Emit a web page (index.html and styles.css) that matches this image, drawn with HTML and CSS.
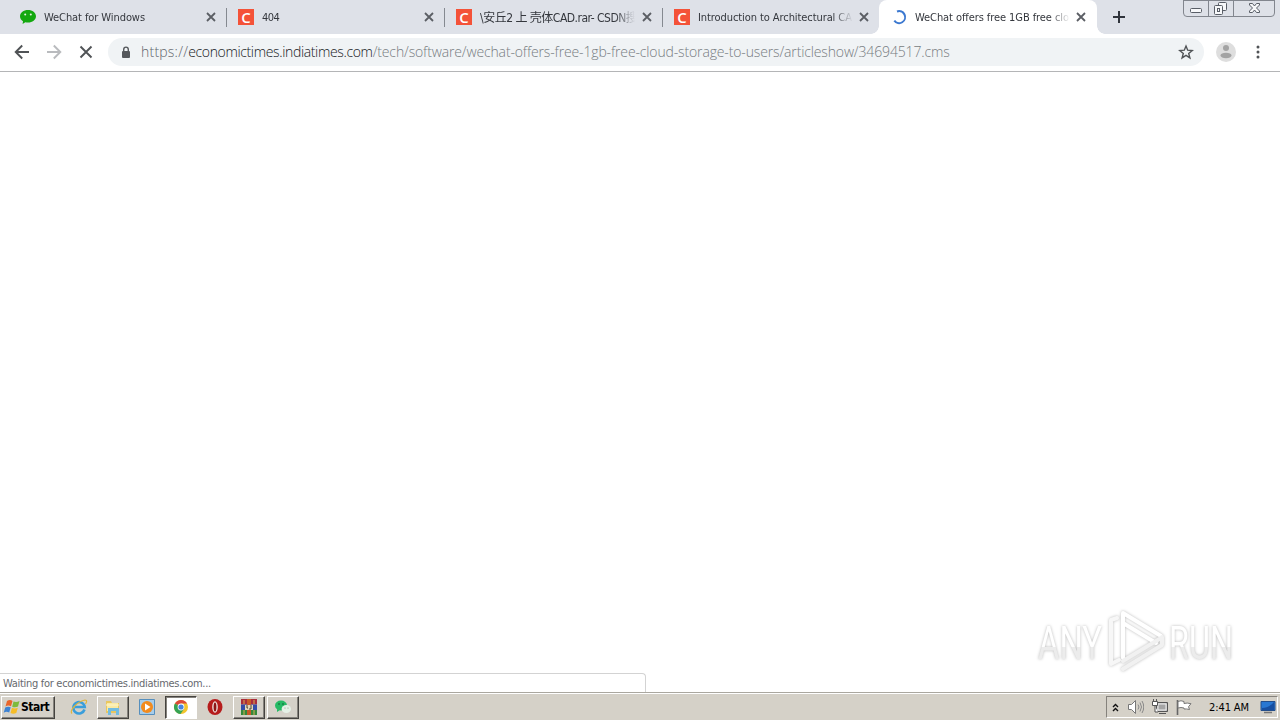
FILE: index.html
```html
<!DOCTYPE html>
<html lang="en">

<head>
    <meta charset="UTF-8">
    <meta name="viewport" content="width=device-width, initial-scale=1.0">
    <title>WeChat offers free 1GB free cloud storage</title>
    <link rel="stylesheet" href="styles.css">
</head>

<body>
    <div class="browser">
        <header class="tab-strip">
            <div class="tab">
                <svg class="favicon" viewBox="0 0 16 16"><path d="M8 1C3.600 1 0 3.700 0 7.300c0 2.100 1.200 3.900 3 5L2.600 15l2.700-1.700c.9.200 1.800.3 2.700.3 4.400 0 8-2.700 8-6.300S12.400 1 8 1z" fill="#13a80f"/><circle cx="5.200" cy="5.500" r="1" fill="#e6f5e3"/><circle cx="10.800" cy="5.500" r="1" fill="#e6f5e3"/></svg>
                <span class="title">WeChat for Windows</span>
                <svg class="close" viewBox="0 0 10 10"><path d="M1 1l8 8M9 1L1 9"/></svg>
            </div>
            <div class="tab">
                <span class="favicon csdn">C</span>
                <span class="title short">404</span>
                <svg class="close" viewBox="0 0 10 10"><path d="M1 1l8 8M9 1L1 9"/></svg>
            </div>
            <div class="tab">
                <span class="favicon csdn">C</span>
                <span class="title cjk">\安丘2 上 壳体CAD.rar- CSDN搜</span>
                <svg class="close" viewBox="0 0 10 10"><path d="M1 1l8 8M9 1L1 9"/></svg>
            </div>
            <div class="tab last">
                <span class="favicon csdn">C</span>
                <span class="title">Introduction to Architectural CA</span>
                <svg class="close" viewBox="0 0 10 10"><path d="M1 1l8 8M9 1L1 9"/></svg>
            </div>
            <div class="tab active">
                <svg class="favicon" viewBox="0 0 16 16"><path d="M6 2.500A6 6 0 1 1 3.300 11.700" fill="none" stroke="#3b78d0" stroke-width="2"/></svg>
                <span class="title">WeChat offers free 1GB free clo</span>
                <svg class="close" viewBox="0 0 10 10"><path d="M1 1l8 8M9 1L1 9"/></svg>
            </div>
            <svg class="new-tab" viewBox="0 0 14 14"><path d="M7 1v12M1 7h12" stroke="#30343c" stroke-width="2"/></svg>
            <svg class="window-buttons" viewBox="0 0 94 18">
                <path d="M1.500 0v13q0 3.500 3.500 3.500h84q3.500 0 3.500-3.500V0M1.500.5h91M26.500 0v16M51.500 0v16" fill="none" stroke="#82868e"/>
                <g fill="#f7f8fa" stroke="#595e67">
                    <rect x="8.500" y="8.500" width="11" height="4" rx="1"/>
                    <rect x="36.500" y="2.500" width="8" height="8" rx="1"/>
                    <rect x="32.500" y="5.500" width="8" height="9" rx="1"/>
                    <rect x="35.500" y="8.500" width="2" height="3"/>
                    <path d="M67.500 3.500h3l2 2.500 2-2.500h3v1.500l-3 3 3 3v1.500h-3l-2-2.500-2 2.500h-3V11l3-3-3-3z"/>
                </g>
            </svg>
        </header>

        <nav class="toolbar">
            <svg class="nav-icon" viewBox="0 0 16 16"><path d="M15 8H2M8.200 1.500L1.700 8l6.500 6.500" stroke="#505356"/></svg>
            <svg class="nav-icon" viewBox="0 0 16 16"><path d="M1 8h13M7.800 1.500L14.300 8l-6.500 6.500" stroke="#b9bbbe"/></svg>
            <svg class="nav-icon" viewBox="0 0 16 16"><path d="M2.500 2.500l11 11M13.500 2.500l-11 11" stroke="#505356"/></svg>
            <div class="omnibox">
                <svg class="lock" viewBox="0 0 10 13"><rect x="1" y="5" width="8" height="7" rx="1" fill="#55585c"/><path d="M2.700 5V3.400a2.300 2.300 0 0 1 4.600 0V5" fill="none" stroke="#55585c" stroke-width="1.400"/></svg>
                <span class="url"><span class="scheme">https://</span><span class="host">economictimes.indiatimes.com</span><span class="path">/tech/software/wechat-offers-free-1gb-free-cloud-storage-to-users/articleshow/34694517.cms</span></span>
                <svg class="star" viewBox="0 0 16 16"><path d="M8 2l1.700 4.200 4.500.3-3.500 2.900 1.200 4.500L8 11.400l-3.900 2.500 1.200-4.500L1.800 6.500l4.500-.3z" fill="none" stroke="#505356" stroke-width="1.400"/></svg>
            </div>
            <svg class="avatar" viewBox="0 0 20 20"><circle cx="10" cy="10" r="10" fill="#dedede"/><circle cx="10" cy="6" r="3" fill="#a3a3a3"/><ellipse cx="10" cy="13.500" rx="5.500" ry="2.700" fill="#a3a3a3"/></svg>
            <svg class="menu" viewBox="0 0 4 14"><g fill="#505356"><circle cx="2" cy="2" r="1.500"/><circle cx="2" cy="7" r="1.500"/><circle cx="2" cy="12" r="1.500"/></g></svg>
        </nav>

        <main class="page">
            <div class="status">Waiting for economictimes.indiatimes.com...</div>
            <svg class="watermark" viewBox="0 0 210 76">
                <defs>
                    <linearGradient id="fade" x1="0" y1="0" x2="0" y2="1">
                        <stop offset=".58" stop-color="#fff"/>
                        <stop offset=".58" stop-color="#ececec"/>
                    </linearGradient>
                </defs>
                <g class="mark-text" fill="url(#fade)">
                    <text x="8" y="57" textLength="64" lengthAdjust="spacingAndGlyphs">ANY</text>
                    <text x="139" y="57" textLength="64" lengthAdjust="spacingAndGlyphs">RUN</text>
                </g>
                <g class="mark-logo">
                    <path d="M87 16l-6 2v44l8-4" stroke="#f7f7f7"/>
                    <path d="M93 56V11l38 23M93 21l33 20"/>
                    <path d="M93 59l38-23M93 67l39-24v-8" stroke="#f1f1f1"/>
                </g>
            </svg>
        </main>
    </div>

    <footer class="taskbar">
        <div class="start">
            <svg viewBox="0 0 18 16"><path d="M4 2q3-1.800 5.500 0L8 7.200q-3-1.400-5.500.3z" fill="#e9652b"/><path d="M10.500 2.500q3 1.200 6-.5L15 7.500q-3 1.500-5.800.2z" fill="#7dbb3d"/><path d="M2.200 8.500q3-1.600 5.500-.2L6.200 13.500q-3-1.500-5.500.2z" fill="#3d83d3"/><path d="M9 8.700q3 1.400 5.800 0l-1.500 5.200q-3 1.600-5.800.1z" fill="#f6bd27"/></svg>
            <span>Start</span>
        </div>
        <div class="task ie">
            <svg viewBox="0 0 18 18"><path d="M14.500 11.500A5.700 5.700 0 1 1 14.700 9H5" fill="none" stroke="#3a9edb" stroke-width="2.600"/><path d="M2 15.500C-1 12.500 8 3 15 2c2.500 0 1.500 2.500.5 4" fill="none" stroke="#e0b53c" stroke-width="1.200"/></svg>
        </div>
        <div class="task raised">
            <svg viewBox="0 0 18 18"><path d="M2 3h5l1 2h7v10H2z" fill="#e9c75f"/><path d="M3 5h11v8H3z" fill="#faeaa4"/><path d="M4 10h11v7h-3v-4H7v4H4z" fill="#73bce1"/><path d="M2 7h13" stroke="#fff5ca"/></svg>
        </div>
        <div class="task">
            <svg viewBox="0 0 18 18"><path d="M1.500 1.500h15v15h-15z" fill="#a7cdea" stroke="#568fbd"/><circle cx="9" cy="9" r="6" fill="#f28b1e"/><path d="M7 5.500l5.500 3.500L7 12.500z" fill="#fff"/></svg>
        </div>
        <div class="task pressed">
            <svg viewBox="0 0 18 18"><circle cx="9" cy="9" r="7" fill="#f3c52d"/><path d="M9 9L2.900 5.500A7 7 0 0 1 15.100 5.500H9z" fill="#dc4939"/><path d="M2.900 5.500A7 7 0 0 0 8.500 16L12 11 9 9z" fill="#36a354"/><circle cx="9" cy="9" r="3.400" fill="#fff"/><circle cx="9" cy="9" r="2.600" fill="#4584df"/></svg>
        </div>
        <div class="task">
            <svg viewBox="0 0 18 18"><ellipse cx="9" cy="9" rx="7.500" ry="8" fill="#b61c1c"/><ellipse cx="9" cy="9" rx="2.800" ry="5.800" fill="#eee3df"/><ellipse cx="9" cy="9" rx="1.400" ry="4.600" fill="#8d1515"/></svg>
        </div>
        <div class="task raised">
            <svg viewBox="0 0 18 18"><path d="M1 1h16v5.500H1z" fill="#a92d3c"/><path d="M1 6.500h16V12H1z" fill="#334da8"/><path d="M1 12h16v5H1z" fill="#35883b"/><path d="M7 1h4v16H7z" fill="#c85928"/><path d="M5 7h8v5H5z" fill="#e3d6ba"/><path d="M7 7v3h1M11 7v4H9" fill="none" stroke="#443"/><path d="M4 2v4M14 2v4M4 12v5M14 12v5" stroke="#d5ad54"/></svg>
        </div>
        <div class="task raised">
            <svg viewBox="0 0 18 18"><ellipse cx="7" cy="7.500" rx="6" ry="5" fill="#25ba64"/><path d="M3 11v3l3-2z" fill="#25ba64"/><circle cx="5" cy="6" r=".8" fill="#115a32"/><circle cx="9" cy="6" r=".8" fill="#115a32"/><ellipse cx="12.300" cy="11" rx="4.700" ry="4" fill="#e5f1e6"/><circle cx="11" cy="10" r=".6" fill="#8aa18d"/><circle cx="14" cy="10" r=".6" fill="#8aa18d"/></svg>
        </div>
        <div class="tray">
            <svg class="chevrons" viewBox="0 0 7 9"><path d="M1 4l2.500-2.500L6 4M1 8l2.500-2.500L6 8" fill="none" stroke="#111" stroke-width="1.400"/></svg>
            <svg class="tray-icon" viewBox="0 0 16 16"><path d="M.5 5.500h3l4-4v13l-4-4h-3z" fill="#fff" stroke="#777"/><path d="M10 5.500q2 2.500 0 5M12 3.500q3 4.500 0 9M14 2q3.500 6 0 12" fill="none" stroke="#888"/></svg>
            <svg class="tray-icon" viewBox="0 0 16 16"><path d="M4.500 3.500h11v9h-11z" fill="#bbb" stroke="#555"/><path d="M6 5h8v6H6z" fill="#a5a5a5" stroke="#eee"/><path d="M.5 2.500h5v4h-5zM3 7v6h3M7 14.500h7M1.500 0v2M4.500 0v2" fill="#fff" stroke="#555"/></svg>
            <svg class="tray-icon" viewBox="0 0 16 16"><path d="M1.500 1v15" stroke="#666" stroke-width="1.600"/><path d="M2 2.500q3-1.500 6 0v2q3-1 7 .2l-2.500 3 1 2.800q-3-.8-5.500-.5V9Q5 8 2 9z" fill="#fff" stroke="#777"/></svg>
            <span class="clock">2:41 AM</span>
            <svg class="tray-icon desktop" viewBox="0 0 16 16"><path d="M1 2.500h14v9H1z" fill="#2877d2" stroke="#234e8b"/><path d="M2 9q7 0 12-6v8H2z" fill="#174fa1"/><path d="M4 13.500h8" stroke="#777" stroke-width="1.500"/></svg>
        </div>
    </footer>
</body>

</html>
```
FILE: styles.css
```css
* {
    box-sizing: border-box;
}

body {
    margin: 0;
    width: 1280px;
    height: 720px;
    display: flex;
    flex-direction: column;
    overflow: hidden;
    background: #fff;
    font-family: "DejaVu Sans Condensed", "DejaVu Sans", "Noto Sans CJK SC", sans-serif;
    font-size: 11px;
    color: #34373d;
}

svg {
    display: block;
    flex: none;
}

.browser {
    flex: 1;
    min-height: 0;
    display: flex;
    flex-direction: column;
}

.tab-strip {
    flex: none;
    height: 34px;
    display: flex;
    padding-left: 9px;
    background: #dee1e8;
}

.tab {
    position: relative;
    width: 218px;
    height: 34px;
    display: flex;
    align-items: center;
    padding-left: 11px;
    flex: none;
}

.tab::after {
    content: "";
    position: absolute;
    top: 8px;
    right: 0;
    width: 1px;
    height: 19px;
    background: #858990;
}

.tab.last {
    width: 216px;
}

.tab.last::after {
    display: none;
}

.tab.active {
    width: 218px;
    padding-left: 12px;
    background: #fff;
    border-radius: 8px 8px 0 0;
}

/* the flared feet of the active tab */
.tab.active::before,
.tab.active::after {
    content: "";
    display: block;
    position: absolute;
    top: auto;
    bottom: 0;
    width: 8px;
    height: 8px;
}

.tab.active::before {
    left: -8px;
    background: radial-gradient(circle at 0 0, transparent 7.5px, #fff 8px);
}

.tab.active::after {
    right: -8px;
    background: radial-gradient(circle at 100% 0, transparent 7.5px, #fff 8px);
}

.favicon {
    width: 16px;
    height: 16px;
    flex: none;
}

.csdn {
    background: #f45238;
    color: #fff;
    font: 600 15px/16px "Open Sans", sans-serif;
    text-align: center;
}

.title {
    width: 155px;
    margin-left: 8px;
    padding-top: 1px;
    white-space: nowrap;
    line-height: 18px;
    letter-spacing: -0.08px;
    -webkit-mask-image: linear-gradient(90deg, #000 135px, transparent 155px);
    mask-image: linear-gradient(90deg, #000 135px, transparent 155px);
}

.title.short {
    letter-spacing: -0.5px;
}

.cjk {
    font-size: 12px;
    letter-spacing: -0.5px;
}

.close {
    width: 10px;
    height: 10px;
    margin-left: 7px;
    stroke: #5b5e64;
    stroke-width: 1.8;
}

.last .close,
.active .close {
    margin-left: 6px;
}

.new-tab {
    width: 14px;
    height: 14px;
    margin: 10px 0 0 15px;
}

.window-buttons {
    width: 94px;
    height: 18px;
    margin-left: auto;
    margin-right: 4px;
}

.toolbar {
    flex: none;
    height: 38px;
    display: flex;
    align-items: center;
    padding: 0 20px 1px 14px;
    border-bottom: 1px solid #b4b5b7;
}

.nav-icon {
    width: 16px;
    height: 16px;
    margin-right: 16px;
    fill: none;
    stroke-width: 1.9;
}

.nav-icon + .nav-icon + .nav-icon {
    margin-right: 14px;
}

.omnibox {
    width: 1096px;
    height: 28px;
    border-radius: 14px;
    background: #f0f3f5;
    display: flex;
    align-items: center;
    padding: 0 10px 0 13px;
}

.lock {
    width: 10px;
    height: 13px;
}

.url {
    flex: 1;
    margin-left: 10px;
    padding-bottom: 1px;
    font-family: "Open Sans", "Noto Sans", sans-serif;
    font-size: 14px;
    font-weight: 300;
    white-space: nowrap;
}

.scheme {
    color: #60656a;
    letter-spacing: 0.22px;
}

.host {
    color: #15181c;
    letter-spacing: -0.35px;
}

.path {
    color: #777c81;
    letter-spacing: -0.14px;
}

.star {
    width: 16px;
    height: 16px;
}

.avatar {
    width: 20px;
    height: 20px;
    margin-left: 12px;
}

.menu {
    width: 4px;
    height: 14px;
    margin-left: auto;
}

.page {
    position: relative;
    flex: 1;
    display: flex;
    align-items: flex-end;
}

.status {
    width: 646px;
    height: 19px;
    padding-left: 3px;
    border: 1px solid #d3d3d3;
    border-width: 1px 1px 0 0;
    border-radius: 0 4px 0 0;
    background: #fff;
    color: #66696e;
    line-height: 19px;
    letter-spacing: -0.3px;
}

.watermark {
    position: absolute;
    left: 1030px;
    top: 530px;
    width: 210px;
    height: 76px;
    filter: drop-shadow(0 0 1.5px #bbb);
}

.mark-text {
    font: 400 46px Roboto, sans-serif;
}

.mark-logo {
    fill: none;
    stroke: #fff;
    stroke-width: 4;
    stroke-linecap: round;
    stroke-linejoin: round;
}

.taskbar {
    flex: none;
    height: 28px;
    display: flex;
    align-items: center;
    padding: 1px 1px 0 1px;
    background: #d5d1c8;
    border-top: 1px solid #aaa79f;
    box-shadow: inset 0 1px #fff;
}

.start,
.raised {
    border: 1px solid;
    border-color: #fff #45433f #45433f #fff;
    box-shadow: inset -1px -1px #85827c;
}

.start {
    width: 54px;
    height: 23px;
    display: flex;
    align-items: center;
    padding-left: 1px;
    margin-right: 8px;
    color: #000;
    font-weight: bold;
    font-size: 12px;
    letter-spacing: -0.5px;
}

.start svg {
    width: 18px;
    height: 16px;
}

.task {
    width: 32px;
    height: 23px;
    margin-right: 2px;
    display: flex;
    align-items: center;
    justify-content: center;
}

.task svg {
    width: 18px;
    height: 18px;
}

.pressed {
    background: #fff;
    border: 1px solid;
    border-color: #45433f #fff #fff #45433f;
    box-shadow: inset 1px 1px #85827c;
}

.tray {
    width: 172px;
    height: 22px;
    margin-left: auto;
    margin-right: 1px;
    display: flex;
    align-items: center;
    border: 1px solid;
    border-color: #85827c #fff #fff #85827c;
    padding-left: 5px;
}

.chevrons {
    width: 7px;
    height: 9px;
    margin-right: 9px;
}

.tray-icon {
    width: 16px;
    height: 16px;
    margin-right: 8px;
}

.clock {
    color: #000;
    margin-left: 9px;
    width: 43px;
    letter-spacing: -0.1px;
    white-space: nowrap;
}

.desktop {
    margin: 0 1px 0 auto;
}
```
